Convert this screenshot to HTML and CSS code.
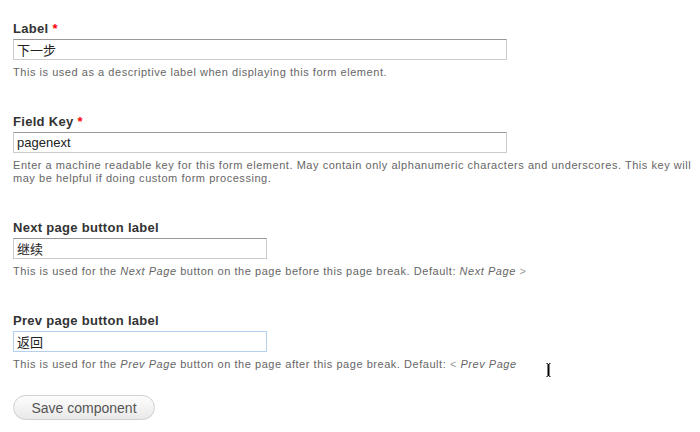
FILE: index.html
```html
<!DOCTYPE html>
<html>
<head>
<meta charset="utf-8">
<link rel="stylesheet" href="styles.css">
</head>
<body>
<form class="form">
  <div class="form-item">
    <label class="form-label">Label <span class="req">*</span></label>
    <input class="text-input wide" type="text" value="下一步">
    <div class="description">This is used as a descriptive label when displaying this form element.</div>
  </div>
  <div class="form-item">
    <label class="form-label">Field Key <span class="req">*</span></label>
    <input class="text-input wide" type="text" value="pagenext">
    <div class="description nowrap">Enter a machine readable key for this form element. May contain only alphanumeric characters and underscores. This key will<br>may be helpful if doing custom form processing.</div>
  </div>
  <div class="form-item">
    <label class="form-label">Next page button label</label>
    <input class="text-input narrow" type="text" value="继续">
    <div class="description">This is used for the <em>Next Page</em> button on the page before this page break. Default: <em>Next Page <span class="arrow">&gt;</span></em></div>
  </div>
  <div class="form-item last">
    <label class="form-label">Prev page button label</label>
    <input class="text-input narrow focused" type="text" value="返回">
    <div class="description">This is used for the <em>Prev Page</em> button on the page after this page break. Default: <em><span class="arrow">&lt;</span> Prev Page</em></div>
  </div>
  <div class="actions">
    <button class="btn" type="button">Save component</button>
  </div>
</form>
<svg class="cursor" width="9" height="18" viewBox="0 0 9 18">
  <path d="M1 1h3l0.5 0.5L5 1h3v2H6v12h2v2H5l-0.5-0.5L4 17H1v-2h2V3H1z" fill="#fff"/>
  <path d="M2 2h2v1h1V2h2v0.5H5.5V15.5H7V16H5v-1H4v1H2v-0.5h1.5V2.5H2z" fill="#000"/>
</svg>
</body>
</html>
```

FILE: styles.css
```css
html, body {
  margin: 0;
  padding: 0;
  background: #fff;
  overflow: hidden;
}

body {
  position: relative;
  width: 700px;
  height: 432px;
  font-family: "Liberation Sans", Arial, "Noto Sans CJK SC", sans-serif;
  color: #333;
}

.form {
  padding: 21px 0 0 13px;
}

.form-item {
  margin-bottom: 35px;
}

.form-item.last {
  margin-bottom: 24px;
}

.form-label {
  display: block;
  font-size: 13px;
  line-height: 16px;
  font-weight: bold;
  letter-spacing: 0.3px;
  color: #333;
  margin-bottom: 2px;
}

.req {
  color: #f00;
}

.text-input {
  display: block;
  box-sizing: border-box;
  height: 21px;
  margin: 0;
  padding: 0 3px;
  border: 1px solid #ccc;
  border-top-color: #999;
  background: #fff;
  font-family: "Liberation Sans", Arial, "Noto Sans CJK SC", sans-serif;
  font-size: 13px;
  color: #222;
  outline: none;
}

.text-input.wide {
  width: 494px;
}

.text-input.narrow {
  width: 254px;
}

.text-input.focused {
  border-color: #b4d0ec;
}

.description {
  margin-top: 6px;
  font-size: 11px;
  line-height: 13px;
  letter-spacing: 0.54px;
  color: #666;
}

.description.nowrap {
  white-space: nowrap;
}

.description em {
  font-style: italic;
}

.arrow {
  font-style: normal;
  color: #999;
}

.btn {
  box-sizing: border-box;
  width: 142px;
  height: 25px;
  padding: 0;
  border: 1px solid #d0d0d0;
  border-radius: 13px;
  background: linear-gradient(#fdfdfd, #e9e9e9);
  font-family: "Liberation Sans", Arial, sans-serif;
  font-size: 14px;
  color: #555;
}

.cursor {
  position: absolute;
  left: 544px;
  top: 361px;
}
```
